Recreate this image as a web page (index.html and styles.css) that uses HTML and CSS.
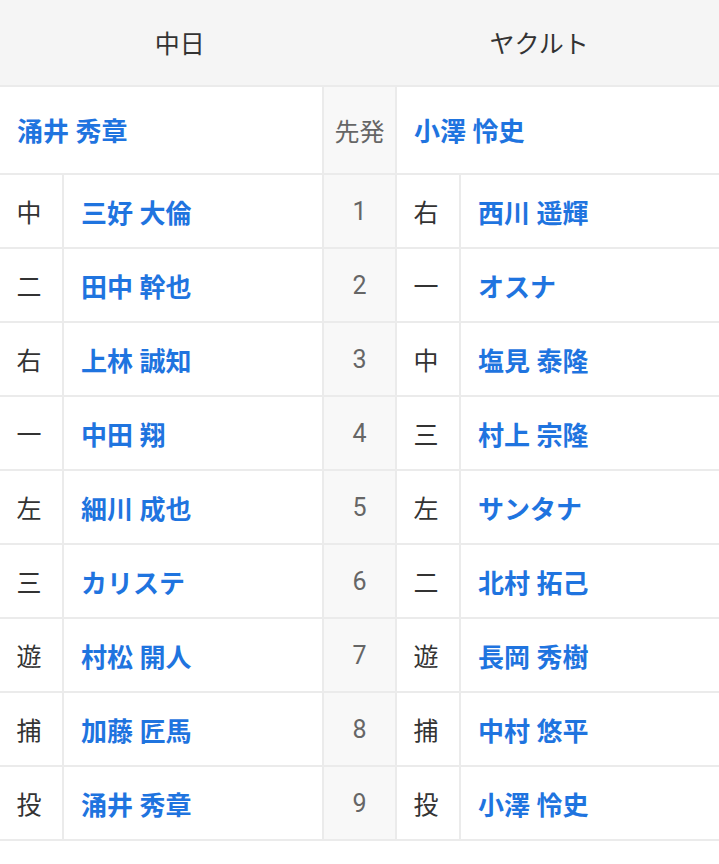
FILE: index.html
```html
<!DOCTYPE html>
<html lang="ja">
<head>
<meta charset="utf-8">
<link rel="stylesheet" href="styles.css">
</head>
<body>
<div class="head">
  <div class="team">中日</div>
  <div class="team">ヤクルト</div>
</div>
<div class="grid">
  <div class="cell name starter wide">涌井 秀章</div>
  <div class="cell mid">先発</div>
  <div class="cell name starter wide">小澤 怜史</div>

  <div class="cell pos">中</div><div class="cell name">三好 大倫</div><div class="cell mid num">1</div><div class="cell pos">右</div><div class="cell name">西川 遥輝</div>
  <div class="cell pos">二</div><div class="cell name">田中 幹也</div><div class="cell mid num">2</div><div class="cell pos">一</div><div class="cell name">オスナ</div>
  <div class="cell pos">右</div><div class="cell name">上林 誠知</div><div class="cell mid num">3</div><div class="cell pos">中</div><div class="cell name">塩見 泰隆</div>
  <div class="cell pos">一</div><div class="cell name">中田 翔</div><div class="cell mid num">4</div><div class="cell pos">三</div><div class="cell name">村上 宗隆</div>
  <div class="cell pos">左</div><div class="cell name">細川 成也</div><div class="cell mid num">5</div><div class="cell pos">左</div><div class="cell name">サンタナ</div>
  <div class="cell pos">三</div><div class="cell name">カリステ</div><div class="cell mid num">6</div><div class="cell pos">二</div><div class="cell name">北村 拓己</div>
  <div class="cell pos">遊</div><div class="cell name">村松 開人</div><div class="cell mid num">7</div><div class="cell pos">遊</div><div class="cell name">長岡 秀樹</div>
  <div class="cell pos">捕</div><div class="cell name">加藤 匠馬</div><div class="cell mid num">8</div><div class="cell pos">捕</div><div class="cell name">中村 悠平</div>
  <div class="cell pos">投</div><div class="cell name">涌井 秀章</div><div class="cell mid num">9</div><div class="cell pos">投</div><div class="cell name">小澤 怜史</div>
</div>
</body>
</html>
```
FILE: styles.css
```css
html, body {
  margin: 0;
  padding: 0;
  background: #ffffff;
}
body {
  font-family: Roboto, "Noto Sans CJK JP", sans-serif;
  width: 719px;
}
.head {
  display: grid;
  grid-template-columns: 1fr 1fr;
  height: 85px;
  background: #f5f5f5;
}
.team {
  display: flex;
  align-items: center;
  justify-content: center;
  font-size: 25px;
  color: #333333;
  padding-bottom: 1px;
}
.grid {
  display: grid;
  grid-template-columns: 62px 258px 71px 62px 1fr;
  grid-template-rows: 86px repeat(9, 72px);
  gap: 2px;
  padding: 2px 0;
  background: #ebebeb;
}
.cell {
  background: #ffffff;
  display: flex;
  align-items: center;
  font-size: 25px;
  color: #333333;
}
.wide {
  grid-column: span 2;
}
.pos {
  justify-content: center;
  padding-right: 4px;
}
.name {
  padding-left: 17px;
  font-size: 26px;
  font-weight: 700;
  color: #1f74df;
}
.starter {
  padding-bottom: 2px;
}
.mid {
  background: #f8f8f8;
  justify-content: center;
  color: #666666;
}
.num {
  font-size: 25px;
  padding-bottom: 0;
}
```
